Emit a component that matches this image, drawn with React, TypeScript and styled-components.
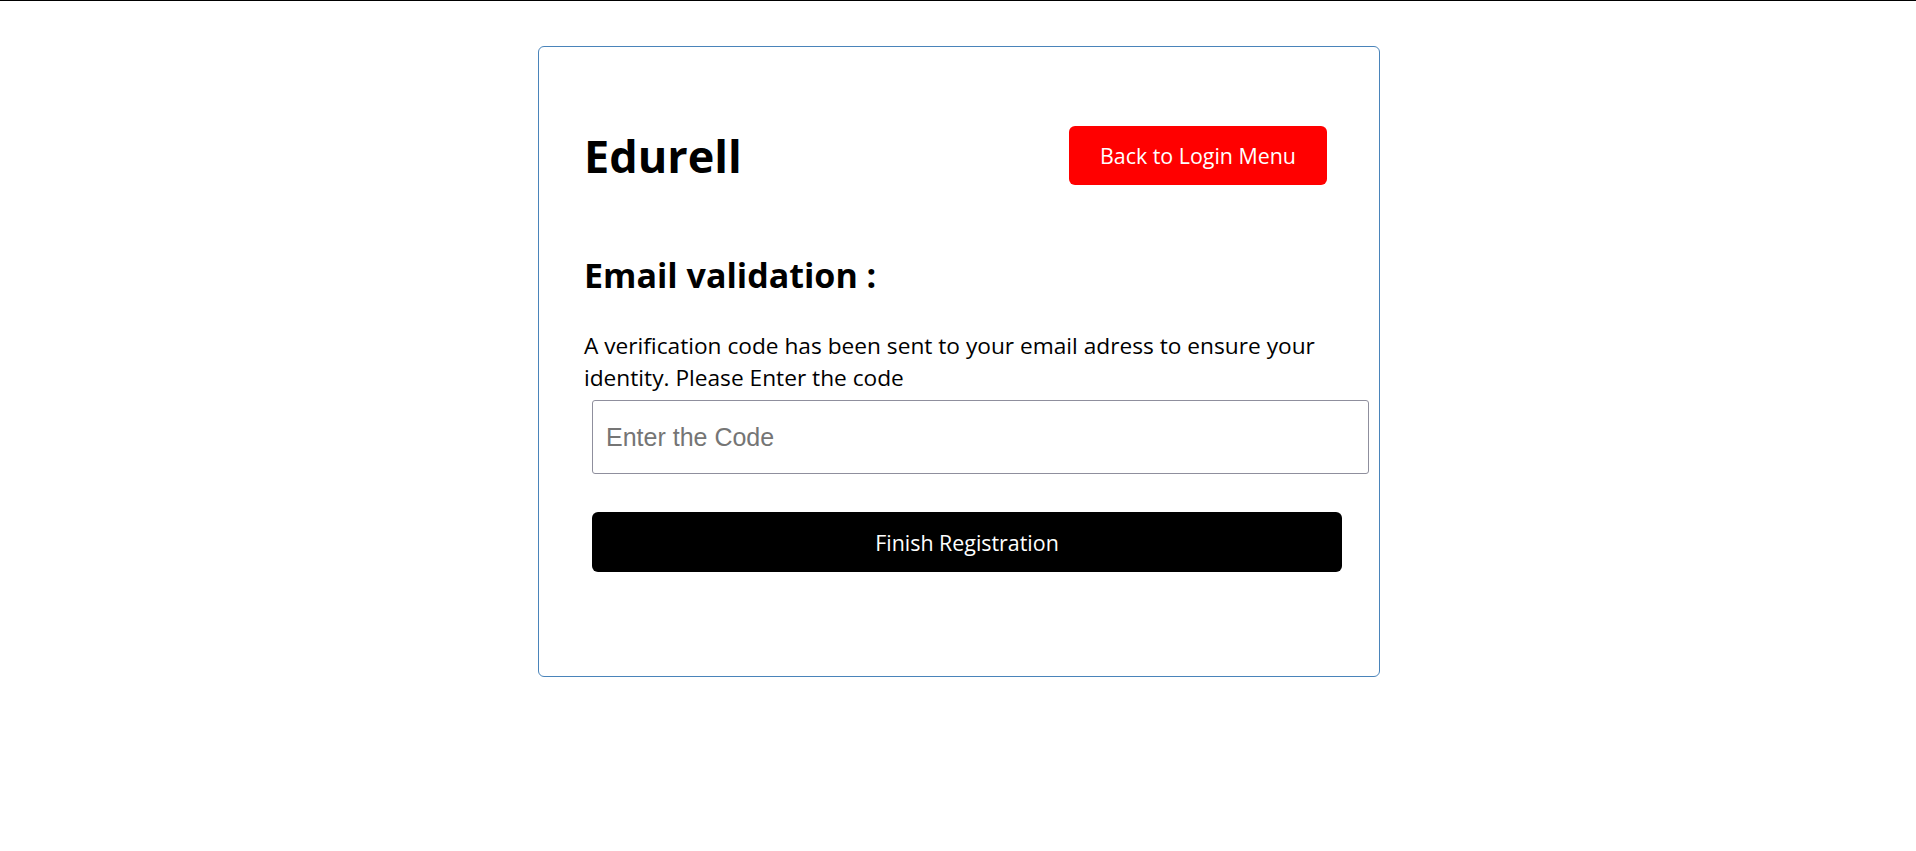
import React from "react";
import styled, { createGlobalStyle } from "styled-components";

const GlobalStyle = createGlobalStyle`
  html, body {
    margin: 0;
    padding: 0;
    background: #ffffff;
    font-family: "Open Sans", "Noto Sans", sans-serif;
    color: #000000;
  }
  * { box-sizing: border-box; }
`;

const TopRule = styled.div`
  height: 1px;
  background: #000000;
`;

const Card = styled.main`
  width: 842px;
  margin: 45px 0 0 calc(50% - 420px);
  border: 1px solid #4a84ba;
  border-radius: 6px;
  padding: 79px 52px 104px 45px;
`;

const HeaderRow = styled.header`
  display: flex;
  justify-content: space-between;
  align-items: center;
  height: 59px;
`;

const Brand = styled.h1`
  margin: 0;
  font-size: 45px;
  font-weight: 700;
  line-height: 1;
`;

const Button = styled.button<{ $tone: "danger" | "dark"; $width: number }>`
  width: ${(p) => p.$width}px;
  height: ${(p) => (p.$tone === "danger" ? 59 : 60)}px;
  border: none;
  border-radius: 6px;
  background: ${(p) => (p.$tone === "danger" ? "#ff0000" : "#000000")};
  color: #ffffff;
  font-family: "Open Sans", "Noto Sans", sans-serif;
  font-size: 21.4px;
  cursor: pointer;
  padding: 0;
`;

const Heading = styled.h2`
  margin: 69px 0 0;
  font-size: 34px;
  font-weight: 700;
  line-height: 43px;
`;

const Text = styled.p`
  margin: 33px 0 0;
  font-size: 22.7px;
  line-height: 32px;
`;

const CodeInput = styled.input`
  display: block;
  width: 777px;
  height: 74px;
  margin: 6px 0 0 8px;
  border: 1px solid #8f8f9d;
  border-radius: 3px;
  padding: 0 13px;
  font-family: "Liberation Sans", Arial, sans-serif;
  font-size: 25px;
  &::placeholder {
    color: #757575;
  }
`;

const SubmitWrap = styled.div`
  margin: 38px 0 0 8px;
`;

export default function App() {
  return (
    <>
      <GlobalStyle />
      <TopRule />
      <Card>
        <HeaderRow>
          <Brand>Edurell</Brand>
          <Button $tone="danger" $width={258}>Back to Login Menu</Button>
        </HeaderRow>
        <Heading>Email validation :</Heading>
        <Text>
          A verification code has been sent to your email adress to ensure your
          identity. Please Enter the code
        </Text>
        <CodeInput placeholder="Enter the Code" />
        <SubmitWrap>
          <Button $tone="dark" $width={750}>Finish Registration</Button>
        </SubmitWrap>
      </Card>
    </>
  );
}
